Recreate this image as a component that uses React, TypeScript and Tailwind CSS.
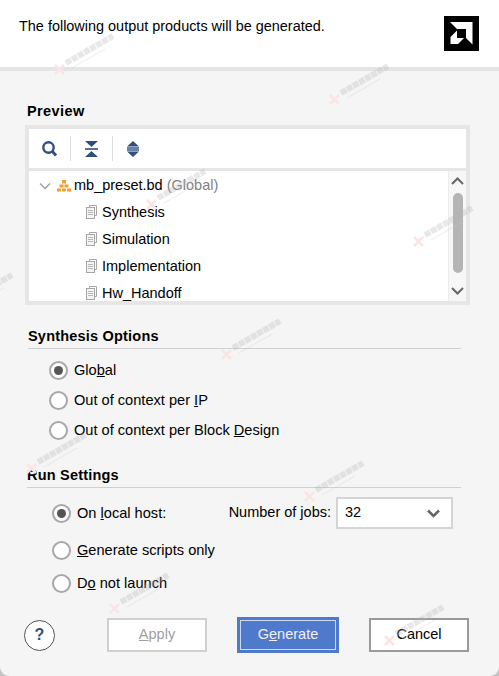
import React from 'react';

const Radio = ({ checked, label }: { checked?: boolean; label: React.ReactNode }) => (
  <div className="flex items-center gap-[6px]">
    <span className="flex h-[19px] w-[19px] shrink-0 items-center justify-center rounded-full border-2 border-[#a8a8a8] bg-white">
      {checked && <span className="h-[9px] w-[9px] rounded-full bg-[#555555]" />}
    </span>
    <span className="text-[14.6px] leading-[22px]">{label}</span>
  </div>
);

const SectionTitle = ({ children }: { children: React.ReactNode }) => (
  <div className="border-b border-[#d0d0d0] pb-[2px] text-[14.5px] font-bold leading-[20px] tracking-[0.2px] text-black">{children}</div>
);

const FileIcon = () => (
  <svg width="13" height="15" viewBox="0 0 13 15" fill="none" stroke="#a6a6a6" className="shrink-0">
    <path d="M4.500 2.500V0.500h7v10h-2" />
    <rect x="1.500" y="2.500" width="8" height="11" fill="#f4f4f4" />
    <path d="M3 5.500h5M3 7.500h5M3 9.500h5" stroke="#b8b8b8" />
  </svg>
);

const TreeRow = ({ label }: { label: string }) => (
  <div className="flex h-[27px] items-center gap-[4px] pl-[56px]">
    <FileIcon />
    <span>{label}</span>
  </div>
);

// faint blog stamps lying over the dialog, unreadable in the picture
const marks = [
  { left: 'left-[50px]', top: 'top-[30px]' },
  { left: 'left-[325px]', top: 'top-[60px]' },
  { left: 'left-[142px]', top: 'top-[165px]' },
  { left: 'left-[409px]', top: 'top-[202px]' },
  { left: 'left-[-51px]', top: 'top-[269px]' },
  { left: 'left-[217px]', top: 'top-[315px]' },
  { left: 'left-[22px]', top: 'top-[429px]' },
  { left: 'left-[300px]', top: 'top-[457px]' },
  { left: 'left-[105px]', top: 'top-[569px]' },
  { left: 'left-[380px]', top: 'top-[601px]' },
];

const Watermark = ({ left, top }: { left: string; top: string }) => (
  <svg width="70" height="48" viewBox="0 0 70 48" fill="none" className={`pointer-events-none absolute ${left} ${top}`}>
    <path d="M5 35l9 9M14 35l-9 9" stroke="#fbe4e4" strokeWidth="2.500" />
    <path d="M16 33L63 6" stroke="#b4b4b4" strokeOpacity="0.3" strokeWidth="6" strokeDasharray="6 1" />
    <path d="M22 38L55 19" stroke="#c8c8c8" strokeOpacity="0.35" strokeWidth="1" />
  </svg>
);

export default function App() {
  return (
    <div className="h-[676px] w-[499px] bg-[#c4c4c4]">
      <div className="relative flex h-[676px] w-[499px] flex-col overflow-hidden rounded-b-[9px] bg-[#f5f5f5] font-['Liberation_Sans',Arial,sans-serif] text-[14.5px] text-black">
        {/* Header */}
        <div className="flex h-[71px] shrink-0 items-start justify-between border-b-4 border-[#e5e5e5] bg-white pl-[19px] pr-[20px] pt-[16px]">
          <span className="text-[14.45px] leading-[20px]">The following output products will be generated.</span>
          <svg width="35" height="35" viewBox="0 0 35 35">
            <rect width="35" height="35" fill="#000" />
            <path d="M6 6H28.500V28.500L22 22V13H13z" fill="#fff" />
            <path d="M13 14.500L6.500 21V28H14L20 22H13z" fill="#fff" />
          </svg>
        </div>

        {/* Preview */}
        <div className="px-[25px] pt-[30px]">
          <div className="pl-[2px] text-[14.5px] font-bold leading-[20px] tracking-[0.4px]">Preview</div>
          <div className="mt-[4px] flex h-[180px] w-[445px] flex-col border-4 border-[#e6e6e6] bg-white">
            <div className="flex h-[42px] shrink-0 items-center border-b-[3px] border-[#e6e6e6] pl-[13px]">
              <svg width="15" height="16" viewBox="0 0 15 16" fill="none" stroke="#2f4f7f" strokeWidth="2.400">
                <circle cx="6.500" cy="6.500" r="5.200" />
                <path d="M10.500 10.500l3.500 4" strokeWidth="2.800" />
              </svg>
              <span className="ml-[13px] mr-[14px] h-[25px] w-px bg-[#dcdcdc]" />
              <svg width="13" height="16" viewBox="0 0 13 16" fill="#2f4f7f">
                <path d="M0 0h13L6.500 6zM0 16h13L6.500 10z" />
                <rect y="7.200" width="13" height="1.600" />
              </svg>
              <span className="mx-[14px] h-[25px] w-px bg-[#dcdcdc]" />
              <svg width="12" height="16" viewBox="0 0 12 16" fill="#2f4f7f">
                <path d="M6 0l6 5.500H0zM6 16l6-5.500H0z" />
                <rect y="6.300" width="12" height="1.400" />
                <rect y="8.300" width="12" height="1.400" />
              </svg>
            </div>
            <div className="flex min-h-0 flex-1">
              <div className="min-w-0 flex-1 overflow-hidden pt-[1px]">
                <div className="flex h-[27px] items-center pl-[10px]">
                  <svg width="12" height="8" viewBox="0 0 12 8" fill="none" stroke="#a0a0a0" strokeWidth="1.500">
                    <path d="M1 1.500l5 5 5-5" />
                  </svg>
                  <svg width="14" height="12" viewBox="0 0 14 12" fill="#f0a030" className="ml-[6px]">
                    <rect x="5" y="0" width="4" height="3.500" />
                    <rect x="2.500" y="4.500" width="4" height="3" />
                    <rect x="7.500" y="4.500" width="4" height="3" />
                    <rect x="0" y="8.500" width="4" height="3" />
                    <rect x="5" y="8.500" width="4" height="3" />
                    <rect x="10" y="8.500" width="4" height="3" />
                  </svg>
                  <span className="ml-[3px]">mb_preset.bd</span>
                  <span className="ml-[4px] text-[#7f7f7f]">(Global)</span>
                </div>
                <TreeRow label="Synthesis" />
                <TreeRow label="Simulation" />
                <TreeRow label="Implementation" />
                <TreeRow label="Hw_Handoff" />
              </div>
              <div className="flex w-[18px] shrink-0 flex-col items-center border-l border-[#ececec] bg-[#f7f7f7] py-[6px]">
                <svg width="13" height="8" viewBox="0 0 13 8" fill="none" stroke="#666" strokeWidth="2">
                  <path d="M1 7l5.500-5.500L12 7" />
                </svg>
                <div className="mb-[14px] mt-[8px] w-[10px] flex-1 rounded-full bg-[#b5b5b5]" />
                <svg width="13" height="8" viewBox="0 0 13 8" fill="none" stroke="#666" strokeWidth="2">
                  <path d="M1 1l5.500 5.500L12 1" />
                </svg>
              </div>
            </div>
          </div>
        </div>

        {/* Synthesis Options */}
        <div className="pl-[28px] pr-[38px] pt-[21px]">
          <SectionTitle>Synthesis Options</SectionTitle>
          <div className="flex flex-col gap-[8px] pl-[21px] pt-[10px]">
            <Radio checked label={<>Glo<u>b</u>al</>} />
            <Radio label={<>Out of context per <u>I</u>P</>} />
            <Radio label={<>Out of context per Block <u>D</u>esign</>} />
          </div>
        </div>

        {/* Run Settings */}
        <div className="pl-[27px] pr-[38px] pt-[24px]">
          <SectionTitle>Run Settings</SectionTitle>
          <div className="flex items-center justify-between pl-[25px] pr-[8px] pt-[9px]">
            <Radio checked label={<>On <u>l</u>ocal host:</>} />
            <div className="flex items-center gap-[5px]">
              <span>Number of jobs:</span>
              <div className="flex h-[32px] w-[117px] items-center justify-between border-2 border-[#d4d4d4] bg-white pl-[7px] pr-[11px]">
                <span>32</span>
                <svg width="13" height="9" viewBox="0 0 13 9" fill="none" stroke="#666" strokeWidth="2.500">
                  <path d="M1 1.500l5.500 5.500L12 1.500" />
                </svg>
              </div>
            </div>
          </div>
          <div className="flex flex-col gap-[11px] pl-[25px] pt-[10px]">
            <Radio label={<><u>G</u>enerate scripts only</>} />
            <Radio label={<>D<u>o</u> not launch</>} />
          </div>
        </div>

        {/* Footer */}
        <div className="flex items-center pl-[24px] pt-[23px]">
          <span className="flex h-[31px] w-[31px] items-center justify-center rounded-full border border-[#555] bg-white text-[16px] font-bold text-[#2f4f7f]">?</span>
          <button className="ml-[52px] h-[34px] w-[100px] border-2 border-[#d0d0d0] bg-white text-[#a0a0a0]"><u>A</u>pply</button>
          <button className="ml-[30px] h-[36px] w-[102px] border-[3px] border-[#4f7acb] bg-[#4f7acb] text-[#f0f0f0] outline-1 -outline-offset-4 outline-[#cfd9ee]">G<u>e</u>nerate</button>
          <button className="ml-[30px] h-[34px] w-[100px] border-2 border-[#9a9a9a] bg-white">Cancel</button>
        </div>

        {marks.map(m => (
          <Watermark key={m.left} left={m.left} top={m.top} />
        ))}
      </div>
    </div>
  );
}
